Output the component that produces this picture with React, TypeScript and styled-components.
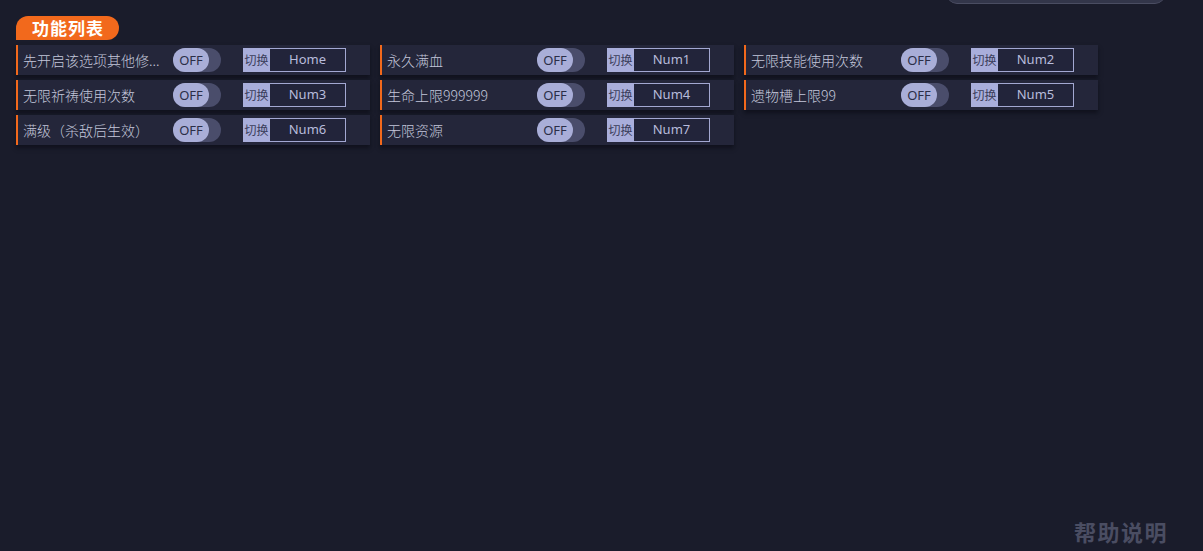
import React, { useState } from 'react'
import styled, { createGlobalStyle } from 'styled-components'

const GlobalStyle = createGlobalStyle`
  html, body {
    margin: 0;
    padding: 0;
    background: #1a1c2b;
  }
  body {
    font-family: 'Noto Sans', 'Noto Sans CJK SC', sans-serif;
    overflow: hidden;
  }
`

const Page = styled.div`
  position: relative;
  width: 1203px;
  height: 551px;
  box-sizing: border-box;
  padding: 16px 0 8px 16px;
  display: flex;
  flex-direction: column;
  background: #1a1c2b;
`

const TopBar = styled.div`
  position: absolute;
  top: -20px;
  left: 947px;
  width: 218px;
  height: 23px;
  border-radius: 0 0 10px 10px;
  background: #33364a;
  border-bottom: 1px solid #4a4d62;
`

const Title = styled.div`
  align-self: flex-start;
  height: 24px;
  padding: 0 15px 0 16px;
  border-radius: 12px 12px 12px 0;
  background: #f2691c;
  color: #ffffff;
  font-family: 'Noto Sans CJK SC', sans-serif;
  font-size: 17px;
  font-weight: 700;
  line-height: 24px;
  letter-spacing: 1px;
`

const Grid = styled.div`
  margin-top: 5px;
  display: grid;
  grid-template-columns: repeat(3, 354px);
  column-gap: 10px;
  row-gap: 5px;
`

const Row = styled.div`
  height: 30px;
  display: flex;
  align-items: center;
  box-sizing: border-box;
  padding-left: 5px;
  background: #24263a;
  border-left: 2px solid #f2691c;
  box-shadow: 0 3px 4px rgba(8, 9, 16, 0.55);
`

const Label = styled.div`
  width: 146px;
  flex-shrink: 0;
  color: #c3c6da;
  font-family: 'Noto Sans CJK SC', sans-serif;
  font-size: 14px;
  font-weight: 300;
  white-space: nowrap;
  overflow: hidden;
`

const Toggle = styled.div<{ on: boolean }>`
  margin-left: 4px;
  width: 48px;
  height: 24px;
  border-radius: 12px;
  background: ${({ on }) => (on ? '#f2691c' : '#4a4d6b')};
  display: flex;
  justify-content: ${({ on }) => (on ? 'flex-end' : 'flex-start')};
  cursor: pointer;
`

const Knob = styled.div`
  width: 36px;
  height: 24px;
  border-radius: 12px;
  background: #a9aed8;
  color: #2b2e47;
  font-family: 'Noto Sans', sans-serif;
  font-size: 13px;
  line-height: 24px;
  text-align: center;
`

const HotKey = styled.div`
  margin-left: 22px;
  height: 24px;
  display: flex;
`

const HotKeyTag = styled.div`
  width: 27px;
  background: #a9aedb;
  color: #3a3d5a;
  font-family: 'Noto Sans CJK SC', sans-serif;
  font-size: 12px;
  line-height: 24px;
  text-align: center;
`

const HotKeyValue = styled.div`
  width: 76px;
  box-sizing: border-box;
  border: 1px solid #a3a8d2;
  border-left: none;
  background: #22243a;
  color: #b8bcdc;
  font-family: 'Noto Sans', sans-serif;
  font-size: 13px;
  line-height: 21px;
  text-align: center;
`

const Footer = styled.div`
  margin-top: auto;
  align-self: flex-end;
  padding-right: 35px;
  color: #4a4d62;
  font-family: 'Noto Sans CJK SC', sans-serif;
  font-size: 22px;
  font-weight: 700;
  line-height: 24px;
  letter-spacing: 1.5px;
`

const features = [
  { name: '先开启该选项其他修...', key: 'Home' },
  { name: '永久满血', key: 'Num1' },
  { name: '无限技能使用次数', key: 'Num2' },
  { name: '无限祈祷使用次数', key: 'Num3' },
  { name: '生命上限999999', key: 'Num4' },
  { name: '遗物槽上限99', key: 'Num5' },
  { name: '满级（杀敌后生效）', key: 'Num6' },
  { name: '无限资源', key: 'Num7' },
]

const App = () => {
  const [states, setStates] = useState<boolean[]>(features.map(() => false))

  const flip = (i: number) => setStates((s) => s.map((v, j) => (j === i ? !v : v)))

  return (
    <Page>
      <GlobalStyle />
      <TopBar />
      <Title>功能列表</Title>
      <Grid>
        {features.map((f, i) => (
          <Row key={f.key}>
            <Label>{f.name}</Label>
            <Toggle on={states[i]} onClick={() => flip(i)}>
              <Knob>{states[i] ? 'ON' : 'OFF'}</Knob>
            </Toggle>
            <HotKey>
              <HotKeyTag>切换</HotKeyTag>
              <HotKeyValue>{f.key}</HotKeyValue>
            </HotKey>
          </Row>
        ))}
      </Grid>
      <Footer>帮助说明</Footer>
    </Page>
  )
}

export default App
